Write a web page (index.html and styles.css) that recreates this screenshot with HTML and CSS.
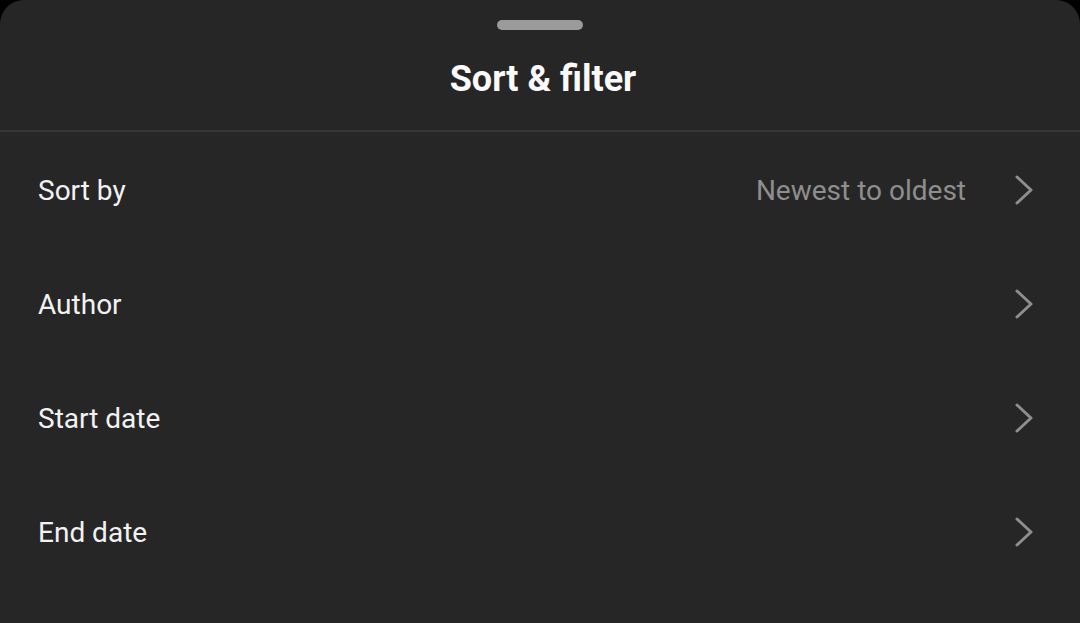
FILE: index.html
```html
<!DOCTYPE html>
<html lang="en">
<head>
    <meta charset="UTF-8">
    <meta name="viewport" content="width=device-width, initial-scale=1.0">
    <title>Sort &amp; filter</title>
    <link rel="stylesheet" href="styles.css">
</head>
<body>
    <div class="sheet">
        <div class="handle"></div>
        <h2 class="title">Sort &amp; filter</h2>
        <ul class="options">
            <li class="option">
                <span class="label">Sort by</span>
                <span class="value">Newest to oldest</span>
                <svg class="chevron" viewBox="0 0 20 32"><path d="M3 3 L17 16 L3 29" /></svg>
            </li>
            <li class="option">
                <span class="label">Author</span>
                <svg class="chevron" viewBox="0 0 20 32"><path d="M3 3 L17 16 L3 29" /></svg>
            </li>
            <li class="option">
                <span class="label">Start date</span>
                <svg class="chevron" viewBox="0 0 20 32"><path d="M3 3 L17 16 L3 29" /></svg>
            </li>
            <li class="option">
                <span class="label">End date</span>
                <svg class="chevron" viewBox="0 0 20 32"><path d="M3 3 L17 16 L3 29" /></svg>
            </li>
        </ul>
    </div>
</body>
</html>
```

FILE: styles.css
```css
body {
    margin: 0;
    background: #000;
    font-family: Roboto, 'Noto Sans', sans-serif;
    height: 623px;
    overflow: hidden;
}

.sheet {
    background: #262626;
    border-radius: 24px 24px 0 0;
    height: 623px;
    display: flex;
    flex-direction: column;
}

.handle {
    width: 86px;
    height: 10px;
    border-radius: 5px;
    background: #9b9b9b;
    margin: 20px auto 0;
}

.title {
    margin: 0;
    height: 100px;
    line-height: 98px;
    padding-left: 6px;
    text-align: center;
    font-size: 36px;
    font-weight: bold;
    color: #fafafa;
    border-bottom: 2px solid #363636;
}

.options {
    list-style: none;
    margin: 0;
    padding: 0;
}

.option {
    height: 114px;
    display: flex;
    align-items: center;
    padding: 2px 46px 0 38px;
    box-sizing: border-box;
    font-size: 28px;
}

.label {
    color: #f2f2f2;
    flex: 1;
}

.value {
    color: #8e8e8e;
    margin-right: 48px;
}

.chevron {
    width: 20px;
    height: 32px;
    fill: none;
    stroke: #8e8e8e;
    stroke-width: 3;
    stroke-linecap: round;
    stroke-linejoin: round;
}
```
